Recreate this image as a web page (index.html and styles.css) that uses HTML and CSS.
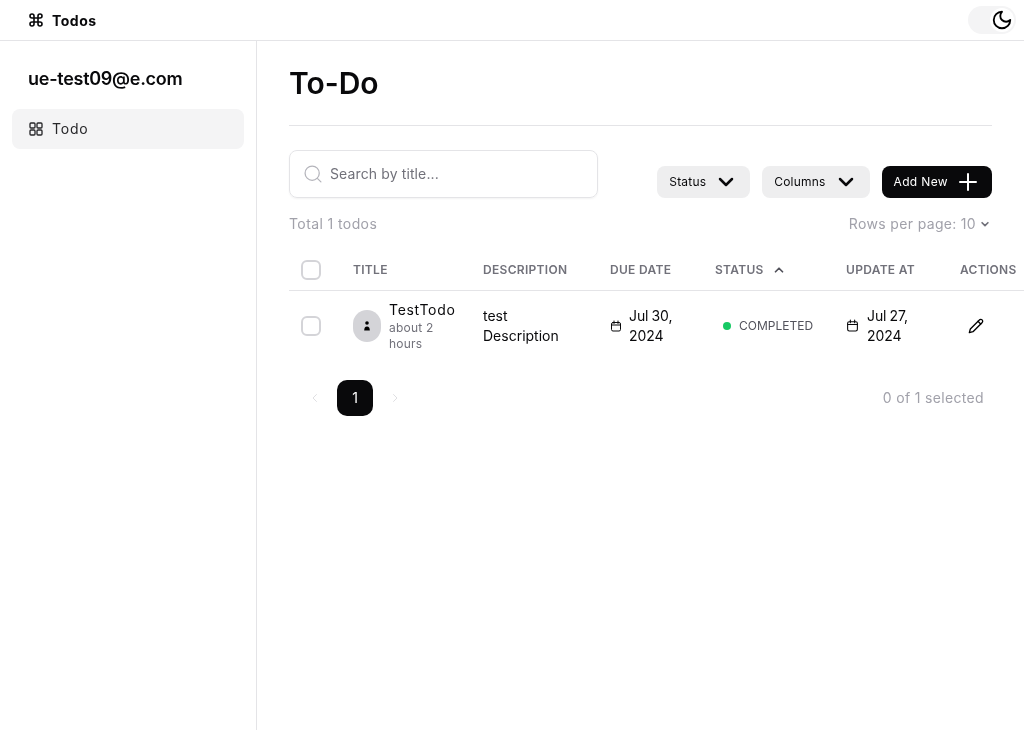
FILE: index.html
```html
<!DOCTYPE html>
<html lang="en">
<head>
    <meta charset="UTF-8">
    <meta name="viewport" content="width=device-width, initial-scale=1.0">
    <title>Todos</title>
    <link rel="stylesheet" href="styles.css">
</head>
<body>
    <header class="topbar">
        <div class="brand">
            <svg class="icon-16" viewBox="0 0 24 24" fill="none" stroke="currentColor" stroke-width="2.4" stroke-linecap="round" stroke-linejoin="round"><path d="M15 6v12a3 3 0 1 0 3-3H6a3 3 0 1 0 3 3V6a3 3 0 1 0-3 3h12a3 3 0 1 0-3-3"/></svg>
            <span>Todos</span>
        </div>
        <div class="theme-switch">
            <span class="theme-thumb">
                <svg viewBox="0 0 24 24" fill="none" stroke="currentColor" stroke-width="2" stroke-linecap="round" stroke-linejoin="round"><path d="M12 3a6 6 0 0 0 9 9 9 9 0 1 1-9-9Z"/></svg>
            </span>
        </div>
    </header>

    <div class="layout">
        <aside class="sidebar">
            <h2 class="user-email">ue-test09@e.com</h2>
            <a class="side-link">
                <svg class="icon-16" viewBox="0 0 24 24" fill="none" stroke="currentColor" stroke-width="2" stroke-linecap="round" stroke-linejoin="round"><rect x="3" y="3" width="7.5" height="7.5" rx="1.5"/><rect x="13.5" y="3" width="7.5" height="7.5" rx="1.5"/><rect x="3" y="13.5" width="7.5" height="7.5" rx="1.5"/><rect x="13.5" y="13.5" width="7.5" height="7.5" rx="1.5"/></svg>
                <span class="lift">Todo</span>
            </a>
        </aside>

        <main class="content">
            <div class="page-head">
                <h1>To-Do</h1>
            </div>

            <div class="toolbar">
                <div class="search">
                    <svg viewBox="0 0 24 24" fill="none" stroke="currentColor" stroke-width="1.5" stroke-linecap="round"><circle cx="11" cy="11" r="8.5"/><path d="m17.5 17.5 4 4"/></svg>
                    <span class="lift">Search by title...</span>
                </div>
                <div class="actions">
                    <button class="btn"><span class="lift">Status</span>
                        <svg viewBox="0 0 24 24" fill="none" stroke="currentColor" stroke-width="2.5" stroke-linecap="round" stroke-linejoin="round"><path d="m6 9 6 6 6-6"/></svg>
                    </button>
                    <button class="btn"><span class="lift">Columns</span>
                        <svg viewBox="0 0 24 24" fill="none" stroke="currentColor" stroke-width="2.5" stroke-linecap="round" stroke-linejoin="round"><path d="m6 9 6 6 6-6"/></svg>
                    </button>
                    <button class="btn btn-dark"><span class="lift">Add New</span>
                        <svg viewBox="0 0 24 24" fill="none" stroke="currentColor" stroke-width="2" stroke-linecap="round"><path d="M12 4v16M4 12h16"/></svg>
                    </button>
                </div>
            </div>

            <div class="table-meta">
                <span class="total">Total 1 todos</span>
                <span class="rows-per-page">Rows per page: <b>10</b>
                    <svg viewBox="0 0 24 24" fill="none" stroke="currentColor" stroke-width="4" stroke-linecap="round" stroke-linejoin="round"><path d="m5 9 7 7 7-7"/></svg>
                </span>
            </div>

            <table class="todo-table">
                <colgroup>
                    <col class="col-check"><col class="col-title"><col class="col-desc"><col class="col-due"><col class="col-status"><col class="col-update"><col class="col-actions">
                </colgroup>
                <thead>
                    <tr>
                        <th><span class="checkbox"></span></th>
                        <th>Title</th>
                        <th>Description</th>
                        <th>Due Date</th>
                        <th>Status
                            <svg class="sort" viewBox="0 0 24 24" fill="none" stroke="currentColor" stroke-width="3" stroke-linecap="round" stroke-linejoin="round"><path d="m6 15 6-6 6 6"/></svg>
                        </th>
                        <th>Update At</th>
                        <th>Actions</th>
                    </tr>
                </thead>
                <tbody>
                    <tr>
                        <td><span class="checkbox"></span></td>
                        <td>
                            <div class="title-cell">
                                <span class="avatar">
                                    <svg viewBox="0 0 10 10" fill="currentColor"><circle cx="5" cy="2" r="1.800"/><path d="M2.200 9.500c0-2.900.9-4 2.800-4s2.800 1.100 2.800 4z"/></svg>
                                </span>
                                <div>
                                    <div class="title-name">TestTodo</div>
                                    <div class="title-time">about 2 hours</div>
                                </div>
                            </div>
                        </td>
                        <td>test Description</td>
                        <td>
                            <div class="date-cell">
                                <svg class="cal-sm" viewBox="0 0 24 24" fill="none" stroke="currentColor" stroke-width="2" stroke-linecap="round" stroke-linejoin="round"><rect x="3" y="5" width="18" height="17" rx="3"/><path d="M8 2v5M16 2v5M3 10h18"/></svg>
                                <span>Jul 30, 2024</span>
                            </div>
                        </td>
                        <td>
                            <div class="status-cell"><i class="dot"></i>Completed</div>
                        </td>
                        <td>
                            <div class="date-cell">
                                <svg class="cal-md" viewBox="0 0 24 24" fill="none" stroke="currentColor" stroke-width="2" stroke-linecap="round" stroke-linejoin="round"><rect x="3" y="5" width="18" height="17" rx="3"/><path d="M8 2v5M16 2v5M3 10h18"/></svg>
                                <span>Jul 27, 2024</span>
                            </div>
                        </td>
                        <td>
                            <svg class="edit" viewBox="0 0 24 24" fill="none" stroke="currentColor" stroke-width="2" stroke-linecap="round" stroke-linejoin="round"><path d="M17 3a2.850 2.830 0 1 1 4 4L7.500 20.500 2 22l1.500-5.500Z"/><path d="m15 5 4 4"/></svg>
                        </td>
                    </tr>
                </tbody>
            </table>

            <div class="table-foot">
                <div class="pager">
                    <svg viewBox="0 0 24 24" fill="none" stroke="currentColor" stroke-width="1.500" stroke-linecap="round" stroke-linejoin="round"><path d="m15 5-7 7 7 7"/></svg>
                    <span class="page-num">1</span>
                    <svg viewBox="0 0 24 24" fill="none" stroke="currentColor" stroke-width="1.500" stroke-linecap="round" stroke-linejoin="round"><path d="m9 5 7 7-7 7"/></svg>
                </div>
                <span class="selected">0 of 1 selected</span>
            </div>
        </main>
    </div>
</body>
</html>
```

FILE: styles.css
```css
* {
    box-sizing: border-box;
}
html, body {
    height: 100%;
    overflow: hidden;
}
body {
    margin: 0;
    font-family: Inter, "Liberation Sans", sans-serif;
    font-size: 14px;
    color: #09090b;
    background: #fff;
}
svg {
    display: block;
    flex: none;
}
.icon-16 {
    width: 16px;
    height: 16px;
}
.lift {
    padding-bottom: 2px;
}

.topbar {
    height: 41px;
    display: flex;
    align-items: center;
    justify-content: space-between;
    padding: 0 8px 0 28px;
    border-bottom: 1px solid #e4e4e7;
    will-change: transform;
}
.brand {
    display: flex;
    align-items: center;
    gap: 8px;
    font-weight: 700;
    letter-spacing: 0.5px;
}
.theme-switch {
    width: 48px;
    height: 28px;
    padding: 2px;
    border-radius: 14px;
    background: #f4f4f5;
    display: flex;
    justify-content: flex-end;
    align-items: center;
}
.theme-thumb {
    width: 24px;
    height: 24px;
    display: flex;
    align-items: center;
    justify-content: center;
    border-radius: 50%;
    background: #fff;
    color: #000;
}
.theme-thumb svg {
    width: 22px;
    height: 22px;
}

.layout {
    display: flex;
    height: 689px;
    will-change: transform;
}
.sidebar {
    width: 257px;
    flex: none;
    padding: 0 12px;
    border-right: 1px solid #e4e4e7;
}
.user-email {
    margin: 26px 0 18px 16px;
    font-size: 18px;
    line-height: 24px;
    font-weight: 600;
    letter-spacing: -0.27px;
}
.side-link {
    height: 40px;
    display: flex;
    align-items: center;
    gap: 8px;
    padding: 0 16px;
    border-radius: 8px;
    background: #f4f4f5;
    color: #27272a;
    letter-spacing: 0.8px;
}

.content {
    flex: 1;
    min-width: 0;
    padding: 0 32px;
}
.page-head {
    height: 85px;
    padding-top: 24px;
    border-bottom: 1px solid #e4e4e7;
}
.page-head h1 {
    margin: 0;
    font-size: 30px;
    line-height: 36px;
    font-weight: 600;
}

.toolbar {
    margin-top: 24px;
    display: flex;
    justify-content: space-between;
    align-items: flex-end;
}
.search {
    width: 309px;
    height: 48px;
    display: flex;
    align-items: center;
    gap: 7px;
    padding: 0 13px;
    border: 1px solid #e4e4e7;
    border-radius: 8px;
    box-shadow: 0 1px 2px rgba(0, 0, 0, 0.05);
    color: #71717a;
    letter-spacing: 0.12px;
}
.search svg {
    width: 20px;
    height: 20px;
    color: #b4b4bb;
}
.actions {
    display: flex;
    gap: 12px;
}
.btn {
    height: 32px;
    display: flex;
    align-items: center;
    gap: 8px;
    padding: 0 12px;
    border: none;
    border-radius: 8px;
    background: #eeeeef;
    color: #09090b;
    font-family: inherit;
    font-size: 12px;
    letter-spacing: 0.2px;
}
.btn svg {
    width: 24px;
    height: 24px;
}
.btn-dark {
    background: #09090b;
    color: #fff;
    letter-spacing: 0.35px;
}

.table-meta {
    margin-top: 15px;
    height: 20px;
    padding-right: 2px;
    display: flex;
    justify-content: space-between;
    align-items: center;
    color: #a1a1aa;
}
.total {
    letter-spacing: 0.4px;
}
.rows-per-page {
    display: flex;
    align-items: center;
    gap: 4px;
    letter-spacing: 0.35px;
}
.rows-per-page b {
    font-weight: 400;
}
.rows-per-page svg {
    width: 10px;
    height: 10px;
    margin-top: 2px;
    color: #71717a;
}

.todo-table {
    margin-top: 17px;
    width: 740px;
    table-layout: fixed;
    border-collapse: collapse;
}
.col-check { width: 52px; }
.col-title { width: 130px; }
.col-desc { width: 127px; }
.col-due { width: 105px; }
.col-status { width: 131px; }
.col-update { width: 114px; }
.col-actions { width: 81px; }

.todo-table th {
    height: 40px;
    padding: 0 12px;
    text-align: left;
    font-size: 12px;
    font-weight: 600;
    color: #71717a;
    text-transform: uppercase;
    letter-spacing: 0.3px;
    white-space: nowrap;
    border-bottom: 1px solid #e4e4e7;
}
.todo-table td {
    padding: 9px 12px 8px;
    line-height: 20px;
    vertical-align: middle;
}
.sort {
    display: inline-block;
    width: 14px;
    height: 14px;
    margin-left: 5px;
    vertical-align: -3px;
    color: #52525b;
}
.checkbox {
    display: block;
    width: 20px;
    height: 20px;
    border: 2px solid #d4d4d8;
    border-radius: 6px;
}
.title-cell {
    display: flex;
    align-items: center;
    gap: 8px;
}
.avatar {
    width: 28px;
    height: 32px;
    flex: none;
    display: flex;
    align-items: center;
    justify-content: center;
    border-radius: 14px;
    background: #d4d4d8;
    color: #000;
}
.avatar svg {
    width: 10px;
    height: 10px;
}
.title-name {
    line-height: 20px;
    letter-spacing: 0.7px;
}
.title-time {
    font-size: 12px;
    line-height: 16px;
    color: #71717a;
    letter-spacing: 0.2px;
}
.date-cell {
    display: flex;
    align-items: center;
    gap: 8px;
    letter-spacing: -0.1px;
    word-spacing: -0.7px;
}
.date-cell .cal-sm {
    width: 12px;
    height: 12px;
    margin-right: -1px;
}
.date-cell .cal-md {
    width: 13px;
    height: 13px;
}
.status-cell {
    display: flex;
    align-items: center;
    gap: 8px;
    padding-left: 8px;
    font-size: 12px;
    color: #52525b;
    text-transform: uppercase;
}
.dot {
    width: 8px;
    height: 8px;
    border-radius: 50%;
    background: #17c964;
}
.edit {
    width: 16px;
    height: 16px;
    margin-left: 8px;
    color: #000;
}

.table-foot {
    margin-top: 20px;
    display: flex;
    justify-content: space-between;
    align-items: center;
    padding: 0 8px 0 20px;
}
.pager {
    display: flex;
    align-items: center;
    gap: 16px;
    color: #d4d4d8;
}
.pager svg {
    width: 12px;
    height: 12px;
}
.page-num {
    width: 36px;
    height: 36px;
    display: flex;
    align-items: center;
    justify-content: center;
    border-radius: 10px;
    background: #09090b;
    color: #fff;
}
.selected {
    color: #a1a1aa;
    letter-spacing: 0.33px;
}
```
